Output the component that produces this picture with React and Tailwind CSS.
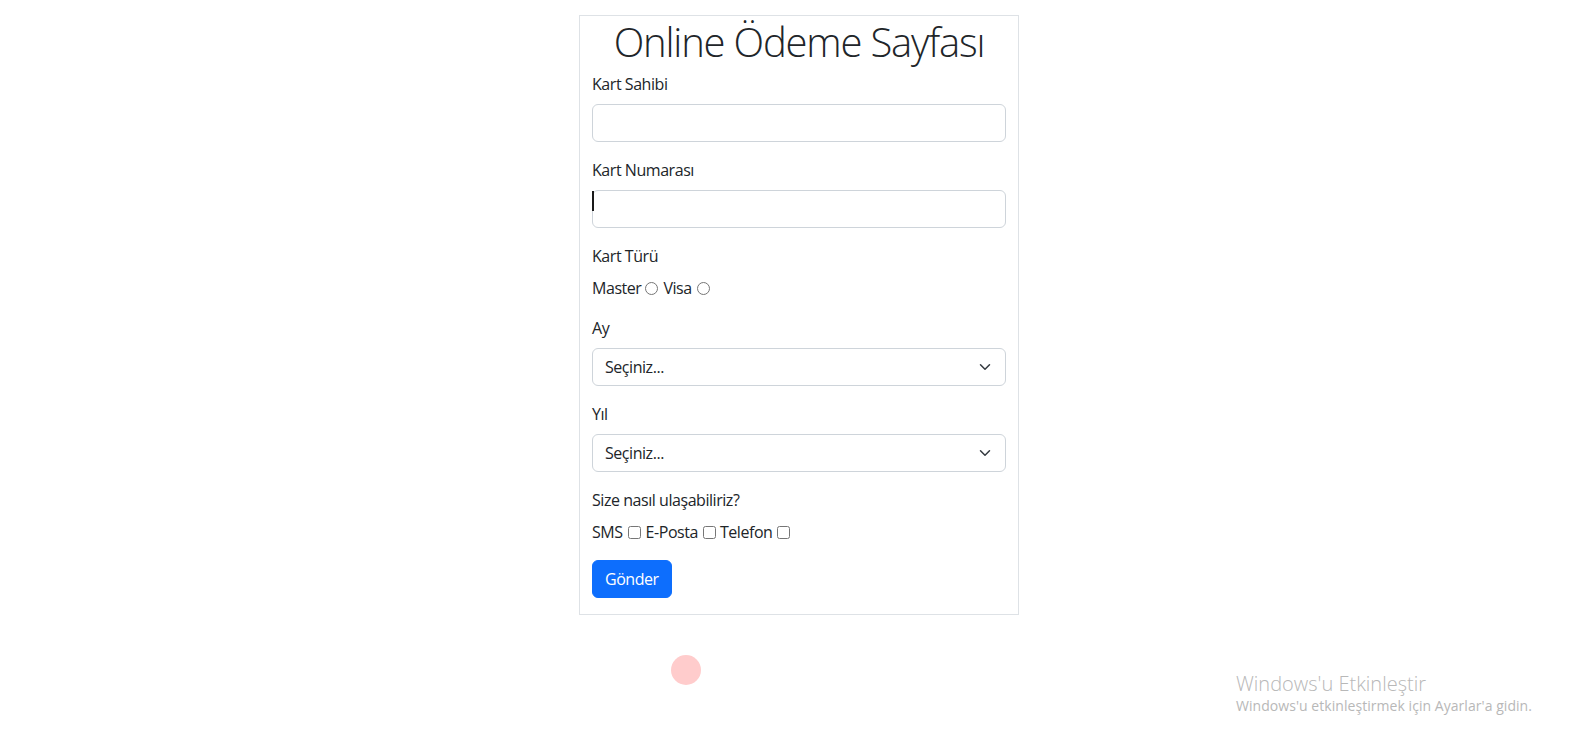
import React from "react";

function Chevron() {
  return (
    <svg
      className="pointer-events-none absolute right-[13px] top-1/2 -translate-y-1/2"
      width="16"
      height="12"
      viewBox="0 0 16 16"
      fill="none"
    >
      <path
        d="m2 5 6 6 6-6"
        stroke="#343a40"
        strokeWidth="2"
        strokeLinecap="round"
        strokeLinejoin="round"
      />
    </svg>
  );
}

function Field({ label, children }) {
  return (
    <div className="mb-4">
      <label className="mb-2 block leading-6">{label}</label>
      {children}
    </div>
  );
}

function SelectBox() {
  return (
    <div className="relative">
      <select className="block h-[38px] w-full appearance-none rounded-[6px] border border-[#ced4da] bg-white pl-3 pr-9 leading-6 tracking-[-0.45px] text-[#212529] outline-none">
        <option>Seçiniz...</option>
      </select>
      <Chevron />
    </div>
  );
}

export default function App() {
  return (
    <div className="relative min-h-screen w-full bg-white font-['Open_Sans','Noto_Sans',sans-serif] text-[16px] tracking-[-0.45px] text-[#212529]">
      <div className="flex justify-center pl-[6px] pt-[15px]">
        <div className="w-[440px] border border-[#dee2e6] px-3">
          <h1 className="mb-2 pt-[3px] text-center text-[40px] font-light leading-[45px] tracking-[-1.2px]">
            Online Ödeme Sayfası
          </h1>
          <form>
            <Field label="Kart Sahibi">
              <input
                type="text"
                className="block h-[38px] w-full rounded-[6px] border border-[#ced4da] px-3 outline-none"
              />
            </Field>
            <Field label="Kart Numarası">
              <div className="relative">
                <input
                  type="text"
                  className="block h-[38px] w-full rounded-[6px] border border-[#ced4da] px-3 outline-none"
                />
                {/* mouse caret */}
                <span className="absolute left-0 top-[1px] h-[20px] w-[2px] bg-[#1a1a1a]" />
              </div>
            </Field>
            <div className="mb-4">
              <label className="mb-2 block leading-6">Kart Türü</label>
              <div className="flex h-6 items-center">
                <span>Master</span>
                <input type="radio" name="tur" className="ml-[4px] mr-[5px] h-[13px] w-[13px]" />
                <span>Visa</span>
                <input type="radio" name="tur" className="ml-[5px] h-[13px] w-[13px]" />
              </div>
            </div>
            <Field label="Ay">
              <SelectBox />
            </Field>
            <Field label="Yıl">
              <SelectBox />
            </Field>
            <div className="mb-4">
              <label className="mb-2 block leading-6">Size nasıl ulaşabiliriz?</label>
              <div className="flex h-6 items-center">
                <span>SMS</span>
                <input type="checkbox" className="ml-[5px] mr-[5px] h-[13px] w-[13px]" />
                <span>E-Posta</span>
                <input type="checkbox" className="ml-[5px] mr-[4px] h-[13px] w-[13px]" />
                <span>Telefon</span>
                <input type="checkbox" className="ml-[5px] h-[13px] w-[13px]" />
              </div>
            </div>
            <div className="mb-4">
              <button
                type="button"
                className="h-[38px] rounded-[6px] border border-[#0d6efd] bg-[#0d6efd] px-3 leading-6 text-white"
              >
                Gönder
              </button>
            </div>
          </form>
        </div>
      </div>

      {/* click highlight */}
      <div className="absolute left-[671px] top-[655px] h-[30px] w-[30px] rounded-full bg-[#ffcccc]" />

      {/* activation watermark */}
      <div className="absolute left-[1236px] top-[670px] tracking-normal text-[#b8b8b8]">
        <div className="text-[20px] font-light leading-[27px]">Windows'u Etkinleştir</div>
        <div className="text-[14px] leading-[17px] tracking-[0.05px]">Windows'u etkinleştirmek için Ayarlar'a gidin.</div>
      </div>
    </div>
  );
}
